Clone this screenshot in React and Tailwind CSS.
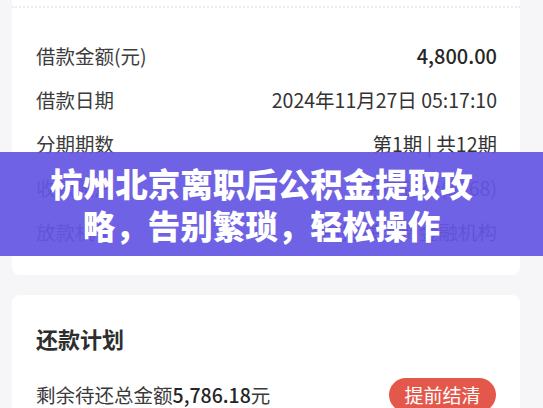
import React from 'react';

const rows = [
  { label: '借款金额(元)', value: '4,800.00', strong: true },
  { label: '借款日期', value: '2024年11月27日 05:17:10' },
  { label: '分期期数', value: '第1期 | 共12期' },
  { label: '收款账户', value: '招商银行(5968)' },
  { label: '放款机构', value: '由招联消费金融机构' },
];

export default function App() {
  return (
    <div
      className="relative w-[543px] h-[408px] overflow-hidden bg-[#f6f6f8]"
      style={{ fontFamily: '"Noto Sans CJK SC", "Noto Sans", sans-serif' }}
    >
      {/* 借款详情卡片 */}
      <div className="ml-[12px] w-[508px] bg-white rounded-b-lg pb-[21px]">
        <div className="pt-[6px]">
          <div className="border-t-2 border-dotted border-[#ececec]" />
        </div>
        <div className="pt-[26px] pr-[23px] pl-[24px]">
          {rows.map((r) => (
            <div key={r.label} className="flex h-[44px] items-center justify-between">
              <span className="text-[19.5px] text-[#3c3c3c]">{r.label}</span>
              <span
                className={
                  r.strong
                    ? 'text-[20px] font-medium text-[#262626]'
                    : 'text-[19.5px] text-[#333333]'
                }
              >
                {r.value}
              </span>
            </div>
          ))}
        </div>
      </div>

      {/* 还款计划卡片 */}
      <div className="ml-[12px] mt-[20px] w-[508px] bg-white rounded-t-lg pt-[28px] px-[24px]">
        <div className="text-[22px] leading-[30px] font-bold text-[#2e2e2e]">还款计划</div>
        <div className="mt-[26px] flex h-[32px] items-center justify-between">
          <span className="text-[19.5px] text-[#3a3a3a]">
            剩余待还总金额<span className="font-medium text-[#262626]">5,786.18</span>元
          </span>
          <button className="h-[34px] w-[107px] rounded-full bg-[#e4574b] text-[19px] text-white">
            提前结清
          </button>
        </div>
      </div>

      {/* 标题横幅 */}
      <div className="absolute left-0 right-0 top-[152px] h-[104px] bg-[#6556e2]/[0.93] flex items-center justify-center pr-[20px]">
        <div className="text-center text-[32.5px] leading-[42px] font-black text-white w-[440px]">
          杭州北京离职后公积金提取攻略，告别繁琐，轻松操作
        </div>
      </div>
    </div>
  );
}
